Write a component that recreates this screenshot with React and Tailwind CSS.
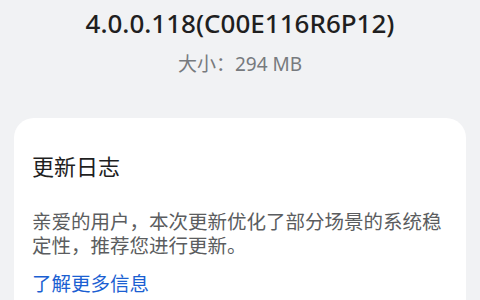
import React from 'react';

const font = { fontFamily: '"Noto Sans", "Noto Sans CJK SC", sans-serif' };

export default function App() {
    return (
        <div className="w-[480px] h-[300px] overflow-hidden bg-[#f1f2f4]" style={font}>
            <div className="flex flex-col items-center pt-[5px]">
                <h1 className="text-[26px] leading-[36px] text-[#1f1f1f] font-medium">4.0.0.118(C00E116R6P12)</h1>
                <p className="mt-[11px] text-[19px] leading-[24px] text-[#777a7e]">大小：294 MB</p>
            </div>

            <div className="mx-[14px] mt-[42px] bg-white rounded-[20px] px-[18px] pt-[33px] pb-6">
                <h2 className="text-[22px] leading-[30px] text-[#1f1f1f]">更新日志</h2>
                <p className="mt-[29px] text-[19.5px] leading-[24px] text-[#5b5d60]">
                    亲爱的用户，本次更新优化了部分场景的系统稳定性，推荐您进行更新。
                </p>
                <a href="#" className="block mt-[13px] text-[19.5px] leading-[26px] text-[#1b5fd2]">了解更多信息</a>
            </div>
        </div>
    );
}
